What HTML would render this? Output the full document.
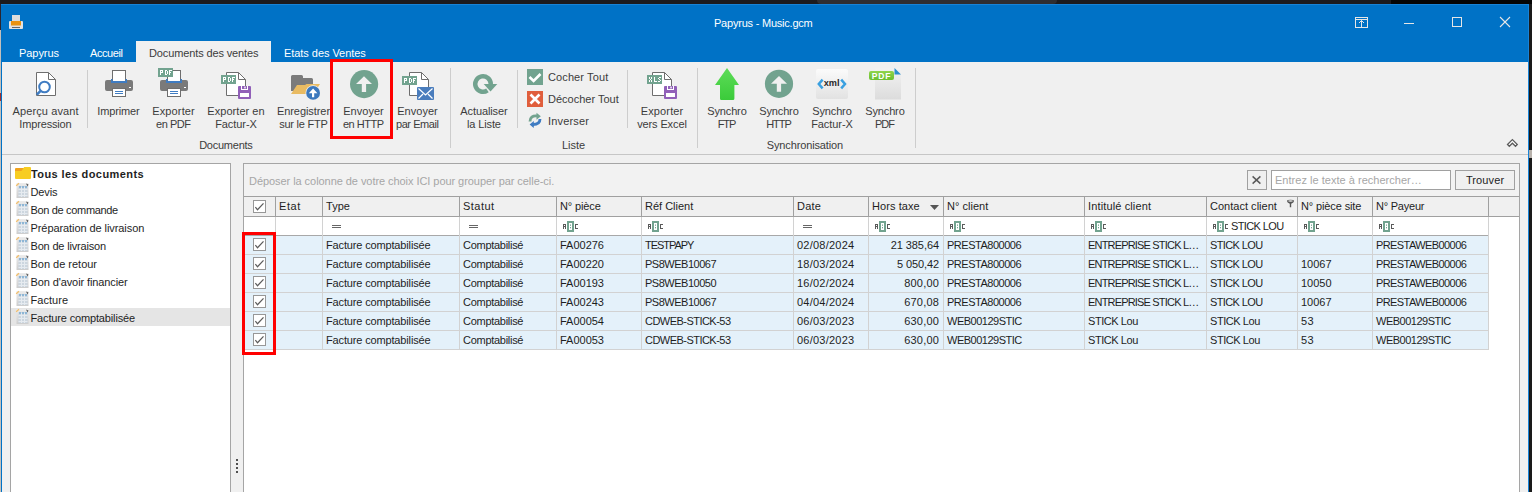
<!DOCTYPE html><html><head><meta charset="utf-8"><style>
*{margin:0;padding:0;box-sizing:border-box}
html,body{width:1532px;height:492px;overflow:hidden;background:#1d1c1f;font-family:"Liberation Sans",sans-serif;font-size:11px;color:#1e1e1e}
.a{position:absolute}
.t{position:absolute;white-space:nowrap;line-height:13px;font-size:11px}
.c{text-align:center}
.w{color:#fff}
.g{color:#a6a6a6}
.b{font-weight:bold}
.r{color:#3c3c3c}
#ov{position:absolute;left:0;top:0}
</style></head><body>
<div class="a" style="left:0px;top:0px;width:1532px;height:4px;background:#1c1b1e"></div>
<div class="a" style="left:817px;top:0px;width:240px;height:4px;background:#2f2e31;border-radius:0 0 6px 6px"></div>
<div class="a" style="left:1391px;top:0px;width:141px;height:4px;background:#050505"></div>
<div class="a" style="left:0px;top:4px;width:1px;height:26px;background:#2a2530"></div>
<div class="a" style="left:0px;top:30px;width:1px;height:462px;background:#c4c0bc"></div>
<div class="a" style="left:0px;top:93px;width:1px;height:8px;background:#a03030"></div>
<div class="a" style="left:1529px;top:4px;width:3px;height:488px;background:#1a1a1a"></div>
<div class="a" style="left:1529px;top:150px;width:3px;height:8px;background:#b8b2ac"></div>
<div class="a" style="left:1px;top:4px;width:1528px;height:58px;background:#0072c6"></div>
<div class="a" style="left:1px;top:4px;width:1528px;height:1px;background:#1883d7"></div>
<div class="a" style="left:1px;top:62px;width:1528px;height:430px;background:#f0f0f0"></div>
<div class="a" style="left:1px;top:62px;width:1px;height:430px;background:#0072c6"></div>
<div class="a" style="left:1528px;top:4px;width:1px;height:488px;background:#1883d7"></div>
<div class="a" style="left:2px;top:154px;width:1526px;height:1px;background:#c6c6c6"></div>
<div class="t w" style="left:714px;top:17px;letter-spacing:-0.217px;">Papyrus - Music.gcm</div>
<div class="a" style="left:136px;top:41px;width:135px;height:21px;background:#f0f0f0"></div>
<div class="t w" style="left:19px;top:47px;letter-spacing:-0.06px;">Papyrus</div>
<div class="t w" style="left:90px;top:47px;letter-spacing:-0.411px;">Accueil</div>
<div class="t r" style="left:149px;top:47px;letter-spacing:-0.126px;">Documents des ventes</div>
<div class="t w" style="left:284px;top:47px;letter-spacing:-0.051px;">Etats des Ventes</div>
<div class="a" style="left:87px;top:70px;width:1px;height:58px;background:#cdcdcd"></div>
<div class="a" style="left:517px;top:70px;width:1px;height:58px;background:#cdcdcd"></div>
<div class="a" style="left:627px;top:70px;width:1px;height:58px;background:#cdcdcd"></div>
<div class="a" style="left:450px;top:68px;width:1px;height:80px;background:#cdcdcd"></div>
<div class="a" style="left:697px;top:68px;width:1px;height:80px;background:#cdcdcd"></div>
<div class="a" style="left:915px;top:68px;width:1px;height:80px;background:#cdcdcd"></div>
<div class="t c r" style="left:-54.4465px;top:105px;width:200px;letter-spacing:0.107px;">Aperçu avant</div>
<div class="t c r" style="left:-54.583px;top:118px;width:200px;letter-spacing:-0.166px;">Impression</div>
<div class="t c r" style="left:18.429px;top:105px;width:200px;letter-spacing:-0.142px;">Imprimer</div>
<div class="t c r" style="left:73.566px;top:105px;width:200px;letter-spacing:0.132px;">Exporter</div>
<div class="t c r" style="left:73.2705px;top:118px;width:200px;letter-spacing:-0.459px;">en PDF</div>
<div class="t c r" style="left:136.021px;top:105px;width:200px;letter-spacing:0.042px;">Exporter en</div>
<div class="t c r" style="left:135.965px;top:118px;width:200px;letter-spacing:-0.07px;">Factur-X</div>
<div class="t c r" style="left:203.47px;top:105px;width:200px;letter-spacing:-0.06px;">Enregistrer</div>
<div class="t c r" style="left:203.376px;top:118px;width:200px;letter-spacing:-0.248px;">sur le FTP</div>
<div class="t c r" style="left:263.5115px;top:105px;width:200px;letter-spacing:0.023px;">Envoyer</div>
<div class="t c r" style="left:263.2485px;top:118px;width:200px;letter-spacing:-0.503px;">en HTTP</div>
<div class="t c r" style="left:317.5115px;top:105px;width:200px;letter-spacing:0.023px;">Envoyer</div>
<div class="t c r" style="left:317.283px;top:118px;width:200px;letter-spacing:-0.434px;">par Email</div>
<div class="t c r" style="left:383.9445px;top:105px;width:200px;letter-spacing:-0.111px;">Actualiser</div>
<div class="t c r" style="left:383.9385px;top:118px;width:200px;letter-spacing:-0.123px;">la Liste</div>
<div class="t c r" style="left:562.066px;top:105px;width:200px;letter-spacing:0.132px;">Exporter</div>
<div class="t c r" style="left:561.9415px;top:118px;width:200px;letter-spacing:-0.117px;">vers Excel</div>
<div class="t c r" style="left:626.9365px;top:105px;width:200px;letter-spacing:-0.127px;">Synchro</div>
<div class="t c r" style="left:626.4295px;top:118px;width:200px;letter-spacing:-1.141px;">FTP</div>
<div class="t c r" style="left:678.9365px;top:105px;width:200px;letter-spacing:-0.127px;">Synchro</div>
<div class="t c r" style="left:678.4775px;top:118px;width:200px;letter-spacing:-1.045px;">HTTP</div>
<div class="t c r" style="left:731.9365px;top:105px;width:200px;letter-spacing:-0.127px;">Synchro</div>
<div class="t c r" style="left:731.965px;top:118px;width:200px;letter-spacing:-0.07px;">Factur-X</div>
<div class="t c r" style="left:784.9365px;top:105px;width:200px;letter-spacing:-0.127px;">Synchro</div>
<div class="t c r" style="left:784.525px;top:118px;width:200px;letter-spacing:-0.95px;">PDF</div>
<div class="t r" style="left:548px;top:71px;letter-spacing:0.109px;">Cocher Tout</div>
<div class="t r" style="left:548px;top:93px;letter-spacing:0.005px;">Décocher Tout</div>
<div class="t r" style="left:548px;top:115px;letter-spacing:0.179px;">Inverser</div>
<div class="t c r" style="left:125.8785px;top:139px;width:200px;letter-spacing:-0.243px;">Documents</div>
<div class="t c r" style="left:473.4935px;top:139px;width:200px;letter-spacing:-0.013px;">Liste</div>
<div class="t c r" style="left:704.933px;top:139px;width:200px;letter-spacing:-0.134px;">Synchronisation</div>
<div class="a" style="left:10px;top:163px;width:221px;height:340px;background:#fff;border:1px solid #a5a5a5"></div>
<div class="a" style="left:11px;top:308px;width:219px;height:18px;background:#e5e5e5"></div>
<div class="t b" style="left:31px;top:168px;letter-spacing:0.415px;">Tous les documents</div>
<div class="t " style="left:30.5px;top:186px;letter-spacing:-0.104px;">Devis</div>
<div class="t " style="left:30.5px;top:204px;letter-spacing:-0.332px;">Bon de commande</div>
<div class="t " style="left:30.5px;top:222px;letter-spacing:-0.077px;">Préparation de livraison</div>
<div class="t " style="left:30.5px;top:240px;letter-spacing:-0.179px;">Bon de livraison</div>
<div class="t " style="left:30.5px;top:258px;letter-spacing:-0.013px;">Bon de retour</div>
<div class="t " style="left:30.5px;top:276px;letter-spacing:-0.106px;">Bon d'avoir financier</div>
<div class="t " style="left:30.5px;top:294px;letter-spacing:0.051px;">Facture</div>
<div class="t " style="left:30.5px;top:312px;letter-spacing:-0.15px;">Facture comptabilisée</div>
<div class="a" style="left:236px;top:459px;width:2px;height:2px;background:#505050"></div>
<div class="a" style="left:236px;top:463px;width:2px;height:2px;background:#505050"></div>
<div class="a" style="left:236px;top:467px;width:2px;height:2px;background:#505050"></div>
<div class="a" style="left:236px;top:471px;width:2px;height:2px;background:#505050"></div>
<div class="a" style="left:243px;top:163px;width:1277px;height:340px;background:#f2f2f2;border:1px solid #a5a5a5"></div>
<div class="t g" style="left:249px;top:175px;letter-spacing:-0.057px;">Déposer la colonne de votre choix ICI pour grouper par celle-ci.</div>
<div class="a" style="left:1247px;top:170px;width:20px;height:20px;background:#f0f0f0;border:1px solid #a0a0a0"></div>
<div class="a" style="left:1271px;top:170px;width:180px;height:20px;background:#fff;border:1px solid #a0a0a0"></div>
<div class="t g" style="left:1275px;top:174px;letter-spacing:0.024px;">Entrez le texte à rechercher…</div>
<div class="a" style="left:1455px;top:170px;width:60px;height:20px;background:#f0f0f0;border:1px solid #a0a0a0"></div>
<div class="t c " style="left:1385.0585px;top:174px;width:200px;letter-spacing:0.117px;">Trouver</div>
<div class="a" style="left:244px;top:196px;width:1275px;height:296px;background:#fff"></div>
<div class="a" style="left:244px;top:196px;width:1275px;height:20px;background:#f0f0f0"></div>
<div class="a" style="left:244px;top:196px;width:1275px;height:1px;background:#a0a0a0"></div>
<div class="a" style="left:244px;top:216px;width:1275px;height:1px;background:#a0a0a0"></div>
<div class="a" style="left:244px;top:235px;width:1245px;height:1px;background:#a8a8a8"></div>
<div class="a" style="left:244px;top:236px;width:1244px;height:18px;background:#e4f1fa"></div>
<div class="a" style="left:244px;top:254px;width:1244px;height:1px;background:#d2d2d2"></div>
<div class="a" style="left:244px;top:255px;width:1244px;height:18px;background:#e4f1fa"></div>
<div class="a" style="left:244px;top:273px;width:1244px;height:1px;background:#d2d2d2"></div>
<div class="a" style="left:244px;top:274px;width:1244px;height:18px;background:#e4f1fa"></div>
<div class="a" style="left:244px;top:292px;width:1244px;height:1px;background:#d2d2d2"></div>
<div class="a" style="left:244px;top:293px;width:1244px;height:18px;background:#e4f1fa"></div>
<div class="a" style="left:244px;top:311px;width:1244px;height:1px;background:#d2d2d2"></div>
<div class="a" style="left:244px;top:312px;width:1244px;height:18px;background:#e4f1fa"></div>
<div class="a" style="left:244px;top:330px;width:1244px;height:1px;background:#d2d2d2"></div>
<div class="a" style="left:244px;top:331px;width:1244px;height:18px;background:#e4f1fa"></div>
<div class="a" style="left:244px;top:349px;width:1244px;height:1px;background:#d2d2d2"></div>
<div class="a" style="left:275px;top:196px;width:1px;height:20px;background:#a0a0a0"></div>
<div class="a" style="left:275px;top:217px;width:1px;height:133px;background:#d2d2d2"></div>
<div class="a" style="left:322px;top:196px;width:1px;height:20px;background:#a0a0a0"></div>
<div class="a" style="left:322px;top:217px;width:1px;height:133px;background:#d2d2d2"></div>
<div class="a" style="left:459px;top:196px;width:1px;height:20px;background:#a0a0a0"></div>
<div class="a" style="left:459px;top:217px;width:1px;height:133px;background:#d2d2d2"></div>
<div class="a" style="left:556px;top:196px;width:1px;height:20px;background:#a0a0a0"></div>
<div class="a" style="left:556px;top:217px;width:1px;height:133px;background:#d2d2d2"></div>
<div class="a" style="left:641px;top:196px;width:1px;height:20px;background:#a0a0a0"></div>
<div class="a" style="left:641px;top:217px;width:1px;height:133px;background:#d2d2d2"></div>
<div class="a" style="left:793px;top:196px;width:1px;height:20px;background:#a0a0a0"></div>
<div class="a" style="left:793px;top:217px;width:1px;height:133px;background:#d2d2d2"></div>
<div class="a" style="left:868px;top:196px;width:1px;height:20px;background:#a0a0a0"></div>
<div class="a" style="left:868px;top:217px;width:1px;height:133px;background:#d2d2d2"></div>
<div class="a" style="left:943px;top:196px;width:1px;height:20px;background:#a0a0a0"></div>
<div class="a" style="left:943px;top:217px;width:1px;height:133px;background:#d2d2d2"></div>
<div class="a" style="left:1084px;top:196px;width:1px;height:20px;background:#a0a0a0"></div>
<div class="a" style="left:1084px;top:217px;width:1px;height:133px;background:#d2d2d2"></div>
<div class="a" style="left:1206px;top:196px;width:1px;height:20px;background:#a0a0a0"></div>
<div class="a" style="left:1206px;top:217px;width:1px;height:133px;background:#d2d2d2"></div>
<div class="a" style="left:1297px;top:196px;width:1px;height:20px;background:#a0a0a0"></div>
<div class="a" style="left:1297px;top:217px;width:1px;height:133px;background:#d2d2d2"></div>
<div class="a" style="left:1372px;top:196px;width:1px;height:20px;background:#a0a0a0"></div>
<div class="a" style="left:1372px;top:217px;width:1px;height:133px;background:#d2d2d2"></div>
<div class="a" style="left:1488px;top:196px;width:1px;height:20px;background:#a0a0a0"></div>
<div class="a" style="left:1488px;top:217px;width:1px;height:133px;background:#d2d2d2"></div>
<div class="a" style="left:253px;top:200px;width:13px;height:13px;background:#fff;border:1px solid #979797"></div>
<div class="t " style="left:279px;top:200px;letter-spacing:0.574px;">Etat</div>
<div class="t " style="left:326px;top:200px;letter-spacing:0.014px;">Type</div>
<div class="t " style="left:463px;top:200px;letter-spacing:0.47px;">Statut</div>
<div class="t " style="left:560px;top:200px;letter-spacing:-0.129px;">N° pièce</div>
<div class="t " style="left:645px;top:200px;letter-spacing:0.0px;">Réf Client</div>
<div class="t " style="left:797px;top:200px;letter-spacing:0.183px;">Date</div>
<div class="t " style="left:872px;top:200px;letter-spacing:0.078px;">Hors taxe</div>
<div class="t " style="left:947px;top:200px;letter-spacing:0.015px;">N° client</div>
<div class="t " style="left:1088px;top:200px;letter-spacing:0.132px;">Intitulé client</div>
<div class="t " style="left:1210px;top:200px;letter-spacing:0.019px;">Contact client</div>
<div class="t " style="left:1301px;top:200px;letter-spacing:-0.123px;">N° pièce site</div>
<div class="t " style="left:1376px;top:200px;letter-spacing:-0.221px;">N° Payeur</div>
<div class="a" style="left:332px;top:225px;width:9px;height:1px;background:#666"></div>
<div class="a" style="left:332px;top:227px;width:9px;height:1px;background:#666"></div>
<div class="a" style="left:469px;top:225px;width:9px;height:1px;background:#666"></div>
<div class="a" style="left:469px;top:227px;width:9px;height:1px;background:#666"></div>
<div class="a" style="left:803px;top:225px;width:9px;height:1px;background:#666"></div>
<div class="a" style="left:803px;top:227px;width:9px;height:1px;background:#666"></div>
<div class="t " style="left:1231px;top:220px;letter-spacing:-0.622px;">STICK LOU</div>
<div class="a" style="left:253px;top:238px;width:13px;height:13px;background:#fff;border:1px solid #979797"></div>
<div class="t " style="left:326px;top:239px;letter-spacing:-0.15px;">Facture comptabilisée</div>
<div class="t " style="left:463px;top:239px;letter-spacing:-0.281px;">Comptabilisé</div>
<div class="t " style="left:560px;top:239px;letter-spacing:-0.008px;">FA00276</div>
<div class="t " style="left:645px;top:239px;letter-spacing:-1.037px;">TESTPAPY</div>
<div class="t " style="left:797px;top:239px;letter-spacing:0.226px;">02/08/2024</div>
<div class="t" style="left:843px;top:239px;width:96px;text-align:right;letter-spacing:-0.067px;margin-right:--0.067px">21 385,64</div>
<div class="t " style="left:947px;top:239px;letter-spacing:-0.482px;">PRESTA800006</div>
<div class="t " style="left:1088px;top:239px;letter-spacing:-0.818px;">ENTREPRISE STICK L…</div>
<div class="t " style="left:1210px;top:239px;letter-spacing:-0.622px;">STICK LOU</div>
<div class="t " style="left:1301px;top:239px;"></div>
<div class="t " style="left:1376px;top:239px;letter-spacing:-0.588px;">PRESTAWEB00006</div>
<div class="a" style="left:253px;top:257px;width:13px;height:13px;background:#fff;border:1px solid #979797"></div>
<div class="t " style="left:326px;top:258px;letter-spacing:-0.15px;">Facture comptabilisée</div>
<div class="t " style="left:463px;top:258px;letter-spacing:-0.281px;">Comptabilisé</div>
<div class="t " style="left:560px;top:258px;letter-spacing:-0.008px;">FA00220</div>
<div class="t " style="left:645px;top:258px;letter-spacing:-0.484px;">PS8WEB10067</div>
<div class="t " style="left:797px;top:258px;letter-spacing:0.226px;">18/03/2024</div>
<div class="t" style="left:843px;top:258px;width:96px;text-align:right;letter-spacing:-0.104px;margin-right:--0.104px">5 050,42</div>
<div class="t " style="left:947px;top:258px;letter-spacing:-0.482px;">PRESTA800006</div>
<div class="t " style="left:1088px;top:258px;letter-spacing:-0.818px;">ENTREPRISE STICK L…</div>
<div class="t " style="left:1210px;top:258px;letter-spacing:-0.622px;">STICK LOU</div>
<div class="t " style="left:1301px;top:258px;letter-spacing:0.002px;">10067</div>
<div class="t " style="left:1376px;top:258px;letter-spacing:-0.588px;">PRESTAWEB00006</div>
<div class="a" style="left:253px;top:276px;width:13px;height:13px;background:#fff;border:1px solid #979797"></div>
<div class="t " style="left:326px;top:277px;letter-spacing:-0.15px;">Facture comptabilisée</div>
<div class="t " style="left:463px;top:277px;letter-spacing:-0.281px;">Comptabilisé</div>
<div class="t " style="left:560px;top:277px;letter-spacing:-0.008px;">FA00193</div>
<div class="t " style="left:645px;top:277px;letter-spacing:-0.484px;">PS8WEB10050</div>
<div class="t " style="left:797px;top:277px;letter-spacing:0.226px;">16/02/2024</div>
<div class="t" style="left:843px;top:277px;width:96px;text-align:right;letter-spacing:0.189px;margin-right:-0.189px">800,00</div>
<div class="t " style="left:947px;top:277px;letter-spacing:-0.482px;">PRESTA800006</div>
<div class="t " style="left:1088px;top:277px;letter-spacing:-0.818px;">ENTREPRISE STICK L…</div>
<div class="t " style="left:1210px;top:277px;letter-spacing:-0.622px;">STICK LOU</div>
<div class="t " style="left:1301px;top:277px;letter-spacing:0.002px;">10050</div>
<div class="t " style="left:1376px;top:277px;letter-spacing:-0.588px;">PRESTAWEB00006</div>
<div class="a" style="left:253px;top:295px;width:13px;height:13px;background:#fff;border:1px solid #979797"></div>
<div class="t " style="left:326px;top:296px;letter-spacing:-0.15px;">Facture comptabilisée</div>
<div class="t " style="left:463px;top:296px;letter-spacing:-0.281px;">Comptabilisé</div>
<div class="t " style="left:560px;top:296px;letter-spacing:-0.008px;">FA00243</div>
<div class="t " style="left:645px;top:296px;letter-spacing:-0.484px;">PS8WEB10067</div>
<div class="t " style="left:797px;top:296px;letter-spacing:0.226px;">04/04/2024</div>
<div class="t" style="left:843px;top:296px;width:96px;text-align:right;letter-spacing:0.189px;margin-right:-0.189px">670,08</div>
<div class="t " style="left:947px;top:296px;letter-spacing:-0.482px;">PRESTA800006</div>
<div class="t " style="left:1088px;top:296px;letter-spacing:-0.818px;">ENTREPRISE STICK L…</div>
<div class="t " style="left:1210px;top:296px;letter-spacing:-0.622px;">STICK LOU</div>
<div class="t " style="left:1301px;top:296px;letter-spacing:0.002px;">10067</div>
<div class="t " style="left:1376px;top:296px;letter-spacing:-0.588px;">PRESTAWEB00006</div>
<div class="a" style="left:253px;top:314px;width:13px;height:13px;background:#fff;border:1px solid #979797"></div>
<div class="t " style="left:326px;top:315px;letter-spacing:-0.15px;">Facture comptabilisée</div>
<div class="t " style="left:463px;top:315px;letter-spacing:-0.281px;">Comptabilisé</div>
<div class="t " style="left:560px;top:315px;letter-spacing:-0.008px;">FA00054</div>
<div class="t " style="left:645px;top:315px;letter-spacing:-0.531px;">CDWEB-STICK-53</div>
<div class="t " style="left:797px;top:315px;letter-spacing:0.226px;">06/03/2023</div>
<div class="t" style="left:843px;top:315px;width:96px;text-align:right;letter-spacing:0.189px;margin-right:-0.189px">630,00</div>
<div class="t " style="left:947px;top:315px;letter-spacing:-0.5px;">WEB00129STIC</div>
<div class="t " style="left:1088px;top:315px;letter-spacing:-0.439px;">STICK Lou</div>
<div class="t " style="left:1210px;top:315px;letter-spacing:-0.439px;">STICK Lou</div>
<div class="t " style="left:1301px;top:315px;letter-spacing:0.35px;">53</div>
<div class="t " style="left:1376px;top:315px;letter-spacing:-0.5px;">WEB00129STIC</div>
<div class="a" style="left:253px;top:333px;width:13px;height:13px;background:#fff;border:1px solid #979797"></div>
<div class="t " style="left:326px;top:334px;letter-spacing:-0.15px;">Facture comptabilisée</div>
<div class="t " style="left:463px;top:334px;letter-spacing:-0.281px;">Comptabilisé</div>
<div class="t " style="left:560px;top:334px;letter-spacing:-0.008px;">FA00053</div>
<div class="t " style="left:645px;top:334px;letter-spacing:-0.531px;">CDWEB-STICK-53</div>
<div class="t " style="left:797px;top:334px;letter-spacing:0.226px;">06/03/2023</div>
<div class="t" style="left:843px;top:334px;width:96px;text-align:right;letter-spacing:0.189px;margin-right:-0.189px">630,00</div>
<div class="t " style="left:947px;top:334px;letter-spacing:-0.5px;">WEB00129STIC</div>
<div class="t " style="left:1088px;top:334px;letter-spacing:-0.439px;">STICK Lou</div>
<div class="t " style="left:1210px;top:334px;letter-spacing:-0.439px;">STICK Lou</div>
<div class="t " style="left:1301px;top:334px;letter-spacing:0.35px;">53</div>
<div class="t " style="left:1376px;top:334px;letter-spacing:-0.5px;">WEB00129STIC</div>
<svg id="ov" width="1532" height="492" viewBox="0 0 1532 492"><rect x="12" y="15" width="8" height="7" fill="#dcdcdc"/><rect x="9" y="21" width="14" height="8" rx="1" fill="#e2e2e2"/><rect x="11" y="21" width="10" height="4.5" fill="#ea9210"/><rect x="12" y="27" width="8" height="1" fill="#666"/><g fill="none" stroke="#e6e6e6" stroke-width="1"><rect x="1355.5" y="17.5" width="12" height="10"/><line x1="1355.5" y1="19.5" x2="1367.5" y2="19.5"/><line x1="1361.5" y1="20.5" x2="1361.5" y2="27.5"/><polyline points="1359,23 1361.5,20.5 1364,23"/></g><line x1="1404" y1="23.5" x2="1414" y2="23.5" stroke="#e6e6e6"/><rect x="1452.5" y="17.5" width="9" height="9" fill="none" stroke="#e6e6e6"/><g stroke="#e6e6e6" stroke-width="1.1"><line x1="1500" y1="17" x2="1510" y2="27"/><line x1="1510" y1="17" x2="1500" y2="27"/></g><path d="M36.5,95.5 V72.5 H48.5 L55.5,79.5 V95.5 Z" fill="#fff" stroke="#6e6e6e"/><path d="M48.5,72.5 V79.5 H55.5" fill="none" stroke="#6e6e6e"/><circle cx="44.5" cy="87" r="5.3" fill="#fff" stroke="#3f7cc2" stroke-width="2"/><line x1="40.6" y1="90.9" x2="36.8" y2="94.7" stroke="#3f7cc2" stroke-width="2.6"/><rect x="112.5" y="70.5" width="13" height="12" fill="#fff" stroke="#6e6e6e"/><path d="M107,80 H111 V83 H127 V80 H131 Q133,80 133,82 V89 Q133,91 131,91 H107 Q105,91 105,89 V82 Q105,80 107,80 Z" fill="#7a7a7a"/><path d="M111,79 V83 H127 V79 H125.5 V81 H112.5 V79 Z" fill="#3f7cc2"/><rect x="129" y="87" width="2" height="1" fill="#fff"/><rect x="112.5" y="88.5" width="13" height="8" fill="#fff" stroke="#6e6e6e"/><rect x="115" y="91" width="8" height="1" fill="#3f7cc2"/><rect x="115" y="93" width="8" height="1" fill="#3f7cc2"/><rect x="167.5" y="70.5" width="13" height="12" fill="#fff" stroke="#6e6e6e"/><path d="M162,80 H166 V83 H182 V80 H186 Q188,80 188,82 V89 Q188,91 186,91 H162 Q160,91 160,89 V82 Q160,80 162,80 Z" fill="#7a7a7a"/><path d="M166,79 V83 H182 V79 H180.5 V81 H167.5 V79 Z" fill="#3f7cc2"/><rect x="184" y="87" width="2" height="1" fill="#fff"/><rect x="167.5" y="88.5" width="13" height="8" fill="#fff" stroke="#6e6e6e"/><rect x="170" y="91" width="8" height="1" fill="#3f7cc2"/><rect x="170" y="93" width="8" height="1" fill="#3f7cc2"/><rect x="158" y="68" width="15" height="9" fill="#72a38f"/><path d="M160,70h1v1h-1zM161,70h1v1h-1zM162,70h1v1h-1zM160,71h1v1h-1zM162,71h1v1h-1zM160,72h1v1h-1zM161,72h1v1h-1zM162,72h1v1h-1zM160,73h1v1h-1zM160,74h1v1h-1zM165,70h1v1h-1zM166,70h1v1h-1zM165,71h1v1h-1zM167,71h1v1h-1zM165,72h1v1h-1zM167,72h1v1h-1zM165,73h1v1h-1zM167,73h1v1h-1zM165,74h1v1h-1zM166,74h1v1h-1zM169,70h1v1h-1zM170,70h1v1h-1zM171,70h1v1h-1zM169,71h1v1h-1zM169,72h1v1h-1zM170,72h1v1h-1zM169,73h1v1h-1zM169,74h1v1h-1z" fill="#fff" shape-rendering="crispEdges"/><path d="M226.5,95.5 V72.5 H238.5 L245.5,79.5 V95.5 Z" fill="#fff" stroke="#6e6e6e"/><path d="M238.5,72.5 V79.5 H245.5" fill="none" stroke="#6e6e6e"/><rect x="221" y="75" width="15" height="9" fill="#72a38f"/><path d="M223,77h1v1h-1zM224,77h1v1h-1zM225,77h1v1h-1zM223,78h1v1h-1zM225,78h1v1h-1zM223,79h1v1h-1zM224,79h1v1h-1zM225,79h1v1h-1zM223,80h1v1h-1zM223,81h1v1h-1zM228,77h1v1h-1zM229,77h1v1h-1zM228,78h1v1h-1zM230,78h1v1h-1zM228,79h1v1h-1zM230,79h1v1h-1zM228,80h1v1h-1zM230,80h1v1h-1zM228,81h1v1h-1zM229,81h1v1h-1zM232,77h1v1h-1zM233,77h1v1h-1zM234,77h1v1h-1zM232,78h1v1h-1zM232,79h1v1h-1zM233,79h1v1h-1zM232,80h1v1h-1zM232,81h1v1h-1z" fill="#fff" shape-rendering="crispEdges"/><rect x="238" y="86" width="13" height="13" rx="1" fill="#9160b8"/><rect x="241" y="86" width="7" height="4" fill="#fff"/><rect x="242" y="86" width="5" height="3" fill="#9160b8"/><rect x="244.3" y="86.6" width="1.4" height="1.8" fill="#fff"/><rect x="240" y="93" width="9" height="4" fill="#fff"/><path d="M291,76.5 Q291,75 292.5,75 H301.5 Q303,75 303,76.5 V78 H311.5 Q313,78 313,79.5 V91 H291 Z" fill="#7b7b7b"/><path d="M297,85 H305 L306.5,84 H320 L313.5,94 H291 Z" fill="#e9bb62"/><circle cx="313.1" cy="92.9" r="7.6" fill="#f0f0f0"/><circle cx="313.1" cy="92.9" r="6.9" fill="#3b78bd"/><path d="M308.8,93.3 L313.1,88.6 L317.4,93.3 H314.2 V97.2 H312 V93.3 Z" fill="#fff"/><circle cx="364.1" cy="84.1" r="14.1" fill="#72a38f"/><path d="M364,76.2 L372,84 H366.1 V92 H361.8 V84 H356 Z" fill="#f0f0f0"/><path d="M409.5,95.5 V72.5 H421.5 L428.5,79.5 V95.5 Z" fill="#fff" stroke="#6e6e6e"/><path d="M421.5,72.5 V79.5 H428.5" fill="none" stroke="#6e6e6e"/><rect x="402" y="76" width="15" height="9" fill="#72a38f"/><path d="M404,78h1v1h-1zM405,78h1v1h-1zM406,78h1v1h-1zM404,79h1v1h-1zM406,79h1v1h-1zM404,80h1v1h-1zM405,80h1v1h-1zM406,80h1v1h-1zM404,81h1v1h-1zM404,82h1v1h-1zM409,78h1v1h-1zM410,78h1v1h-1zM409,79h1v1h-1zM411,79h1v1h-1zM409,80h1v1h-1zM411,80h1v1h-1zM409,81h1v1h-1zM411,81h1v1h-1zM409,82h1v1h-1zM410,82h1v1h-1zM413,78h1v1h-1zM414,78h1v1h-1zM415,78h1v1h-1zM413,79h1v1h-1zM413,80h1v1h-1zM414,80h1v1h-1zM413,81h1v1h-1zM413,82h1v1h-1z" fill="#fff" shape-rendering="crispEdges"/><rect x="417" y="87" width="17" height="13" rx="1" fill="#4a7dbd"/><path d="M418.5,88.5 L425.5,95 L432.5,88.5 M418.5,98.5 L423,94 M432.5,98.5 L428,94" fill="none" stroke="#fff" stroke-width="1.2"/><path d="M490.75,84 A7.75,7.75 0 1 0 487.45,90.35" fill="none" stroke="#72a38f" stroke-width="4.5"/><path d="M483.7,84 H497.3 L490.5,91.4 Z" fill="#72a38f"/><rect x="527" y="69" width="16" height="16" fill="#72a38f"/><path d="M529.5,77 L533.6,81 L540.5,74" fill="none" stroke="#fff" stroke-width="2.6"/><rect x="527" y="91" width="16" height="16" fill="#e05e3c"/><path d="M530.5,94.5 L539.5,103.5 M539.5,94.5 L530.5,103.5" stroke="#fff" stroke-width="2.6"/><path d="M530,121.5 Q530,115.5 537,116" fill="none" stroke="#72a38f" stroke-width="2.8"/><path d="M536.5,112.8 L540.8,116.2 L536.5,119.8 Z" fill="#72a38f"/><path d="M540,119 Q540,124.5 533,124.5" fill="none" stroke="#3f7cc2" stroke-width="2.8"/><path d="M533.8,121 L529.6,124.5 L533.8,128 Z" fill="#3f7cc2"/><path d="M652.5,95.5 V72.5 H664.5 L671.5,79.5 V95.5 Z" fill="#fff" stroke="#6e6e6e"/><path d="M664.5,72.5 V79.5 H671.5" fill="none" stroke="#6e6e6e"/><rect x="647" y="75" width="15" height="9" fill="#72a38f"/><path d="M649,77h1v1h-1zM651,77h1v1h-1zM649,78h1v1h-1zM651,78h1v1h-1zM650,79h1v1h-1zM649,80h1v1h-1zM651,80h1v1h-1zM649,81h1v1h-1zM651,81h1v1h-1zM654,77h1v1h-1zM654,78h1v1h-1zM654,79h1v1h-1zM654,80h1v1h-1zM654,81h1v1h-1zM655,81h1v1h-1zM656,81h1v1h-1zM659,77h1v1h-1zM660,77h1v1h-1zM658,78h1v1h-1zM659,79h1v1h-1zM660,80h1v1h-1zM658,81h1v1h-1zM659,81h1v1h-1z" fill="#fff" shape-rendering="crispEdges"/><rect x="664" y="86" width="13" height="13" rx="1" fill="#9160b8"/><rect x="667" y="86" width="7" height="4" fill="#fff"/><rect x="668" y="86" width="5" height="3" fill="#9160b8"/><rect x="670.3" y="86.6" width="1.4" height="1.8" fill="#fff"/><rect x="666" y="93" width="9" height="4" fill="#fff"/><defs><linearGradient id="ga" x1="0" y1="0" x2="0" y2="1"><stop offset="0" stop-color="#5ddc58"/><stop offset="1" stop-color="#3bcb3a"/></linearGradient><linearGradient id="gx" x1="0" y1="0" x2="0" y2="1"><stop offset="0" stop-color="#fbfbfb"/><stop offset="1" stop-color="#e2e2e2"/></linearGradient><linearGradient id="gp" x1="0" y1="0" x2="0" y2="1"><stop offset="0" stop-color="#f2f2f2"/><stop offset="1" stop-color="#dcdcdc"/></linearGradient><linearGradient id="gt" x1="0" y1="0" x2="0" y2="1"><stop offset="0" stop-color="#ececec"/><stop offset="1" stop-color="#cdcdcd"/></linearGradient><linearGradient id="gg" x1="0" y1="0" x2="0" y2="1"><stop offset="0" stop-color="#8fd44c"/><stop offset="1" stop-color="#6cbf30"/></linearGradient></defs><path d="M727,68 L739,85 H734.4 V98.5 Q734.4,100 733,100 H721.3 Q720,100 720,98.5 V85 H715 Z" fill="url(#ga)"/><circle cx="779" cy="83.8" r="14.1" fill="#72a38f"/><path d="M779,76 L787,83.7 H781.1 V91.7 H776.8 V83.7 H771 Z" fill="#f0f0f0"/><rect x="816" y="69" width="32" height="30" rx="2" fill="url(#gx)"/><path d="M822.6,79.6 L818.8,84 L822.6,88.4" fill="none" stroke="#3aa0e0" stroke-width="2.5"/><path d="M841.2,79.6 L845,84 L841.2,88.4" fill="none" stroke="#3aa0e0" stroke-width="2.5"/><text x="831.6" y="86.4" font-family="Liberation Sans" font-weight="bold" font-size="9.2" fill="#2a2a2a" text-anchor="middle">xml</text><rect x="875" y="68.5" width="26" height="31" fill="url(#gp)"/><path d="M894.5,68 L901,74.5 H894.5 Z" fill="#2b8fcc"/><rect x="869" y="71" width="25" height="9" rx="2" fill="url(#gg)"/><text x="881.5" y="78.8" font-family="Liberation Sans" font-weight="bold" font-size="8.5" fill="#fff" text-anchor="middle" letter-spacing="0.8">PDF</text><path d="M1507.5,144.5 L1512.4,139.6 L1517.3,144.5 L1515.5,146.3 L1512.4,143.2 L1509.3,146.3 Z" fill="#fff" stroke="#5c5c5c" stroke-width="1.25"/><path d="M15,169 Q15,168 16,168 H24 V171 H15 Z" fill="#f0a21e"/><path d="M15,171 H21.5 L24.2,167 H30 Q31,167 31,168 V178 Q31,179 30,179 H16 Q15,179 15,178 Z" fill="#f7cd22"/><rect x="16.5" y="183" width="12" height="15" fill="url(#gt)"/><rect x="18.5" y="186" width="9" height="11" fill="#ccd6df"/><path d="M18.5,189.5 H27.5 M18.5,192.5 H27.5 M18.5,195.5 H27.5 M21.5,187 V197 M24.5,187 V197" stroke="#e6ebf0" stroke-width="1"/><rect x="19" y="186" width="2" height="2" fill="#8db6d6"/><rect x="22" y="186" width="2" height="2" fill="#8db6d6"/><rect x="25" y="186" width="2" height="2" fill="#8db6d6"/><path d="M16.2,185.8 L19,183.2" stroke="#f2be6a" stroke-width="1.2"/><path d="M26,183.5 L28.5,184.5 L27.5,186.5 Z" fill="#5a5a5a"/><rect x="16.5" y="201" width="12" height="15" fill="url(#gt)"/><rect x="18.5" y="204" width="9" height="11" fill="#ccd6df"/><path d="M18.5,207.5 H27.5 M18.5,210.5 H27.5 M18.5,213.5 H27.5 M21.5,205 V215 M24.5,205 V215" stroke="#e6ebf0" stroke-width="1"/><rect x="19" y="204" width="2" height="2" fill="#8db6d6"/><rect x="22" y="204" width="2" height="2" fill="#8db6d6"/><rect x="25" y="204" width="2" height="2" fill="#8db6d6"/><path d="M16.2,203.8 L19,201.2" stroke="#f2be6a" stroke-width="1.2"/><path d="M26,201.5 L28.5,202.5 L27.5,204.5 Z" fill="#5a5a5a"/><rect x="16.5" y="219" width="12" height="15" fill="url(#gt)"/><rect x="18.5" y="222" width="9" height="11" fill="#ccd6df"/><path d="M18.5,225.5 H27.5 M18.5,228.5 H27.5 M18.5,231.5 H27.5 M21.5,223 V233 M24.5,223 V233" stroke="#e6ebf0" stroke-width="1"/><rect x="19" y="222" width="2" height="2" fill="#8db6d6"/><rect x="22" y="222" width="2" height="2" fill="#8db6d6"/><rect x="25" y="222" width="2" height="2" fill="#8db6d6"/><path d="M16.2,221.8 L19,219.2" stroke="#f2be6a" stroke-width="1.2"/><path d="M26,219.5 L28.5,220.5 L27.5,222.5 Z" fill="#5a5a5a"/><rect x="16.5" y="237" width="12" height="15" fill="url(#gt)"/><rect x="18.5" y="240" width="9" height="11" fill="#ccd6df"/><path d="M18.5,243.5 H27.5 M18.5,246.5 H27.5 M18.5,249.5 H27.5 M21.5,241 V251 M24.5,241 V251" stroke="#e6ebf0" stroke-width="1"/><rect x="19" y="240" width="2" height="2" fill="#8db6d6"/><rect x="22" y="240" width="2" height="2" fill="#8db6d6"/><rect x="25" y="240" width="2" height="2" fill="#8db6d6"/><path d="M16.2,239.8 L19,237.2" stroke="#f2be6a" stroke-width="1.2"/><path d="M26,237.5 L28.5,238.5 L27.5,240.5 Z" fill="#5a5a5a"/><rect x="16.5" y="255" width="12" height="15" fill="url(#gt)"/><rect x="18.5" y="258" width="9" height="11" fill="#ccd6df"/><path d="M18.5,261.5 H27.5 M18.5,264.5 H27.5 M18.5,267.5 H27.5 M21.5,259 V269 M24.5,259 V269" stroke="#e6ebf0" stroke-width="1"/><rect x="19" y="258" width="2" height="2" fill="#8db6d6"/><rect x="22" y="258" width="2" height="2" fill="#8db6d6"/><rect x="25" y="258" width="2" height="2" fill="#8db6d6"/><path d="M16.2,257.8 L19,255.2" stroke="#f2be6a" stroke-width="1.2"/><path d="M26,255.5 L28.5,256.5 L27.5,258.5 Z" fill="#5a5a5a"/><rect x="16.5" y="273" width="12" height="15" fill="url(#gt)"/><rect x="18.5" y="276" width="9" height="11" fill="#ccd6df"/><path d="M18.5,279.5 H27.5 M18.5,282.5 H27.5 M18.5,285.5 H27.5 M21.5,277 V287 M24.5,277 V287" stroke="#e6ebf0" stroke-width="1"/><rect x="19" y="276" width="2" height="2" fill="#8db6d6"/><rect x="22" y="276" width="2" height="2" fill="#8db6d6"/><rect x="25" y="276" width="2" height="2" fill="#8db6d6"/><path d="M16.2,275.8 L19,273.2" stroke="#f2be6a" stroke-width="1.2"/><path d="M26,273.5 L28.5,274.5 L27.5,276.5 Z" fill="#5a5a5a"/><rect x="16.5" y="291" width="12" height="15" fill="url(#gt)"/><rect x="18.5" y="294" width="9" height="11" fill="#ccd6df"/><path d="M18.5,297.5 H27.5 M18.5,300.5 H27.5 M18.5,303.5 H27.5 M21.5,295 V305 M24.5,295 V305" stroke="#e6ebf0" stroke-width="1"/><rect x="19" y="294" width="2" height="2" fill="#8db6d6"/><rect x="22" y="294" width="2" height="2" fill="#8db6d6"/><rect x="25" y="294" width="2" height="2" fill="#8db6d6"/><path d="M16.2,293.8 L19,291.2" stroke="#f2be6a" stroke-width="1.2"/><path d="M26,291.5 L28.5,292.5 L27.5,294.5 Z" fill="#5a5a5a"/><rect x="16.5" y="309" width="12" height="15" fill="url(#gt)"/><rect x="18.5" y="312" width="9" height="11" fill="#ccd6df"/><path d="M18.5,315.5 H27.5 M18.5,318.5 H27.5 M18.5,321.5 H27.5 M21.5,313 V323 M24.5,313 V323" stroke="#e6ebf0" stroke-width="1"/><rect x="19" y="312" width="2" height="2" fill="#8db6d6"/><rect x="22" y="312" width="2" height="2" fill="#8db6d6"/><rect x="25" y="312" width="2" height="2" fill="#8db6d6"/><path d="M16.2,311.8 L19,309.2" stroke="#f2be6a" stroke-width="1.2"/><path d="M26,309.5 L28.5,310.5 L27.5,312.5 Z" fill="#5a5a5a"/><path d="M1252.6,176.4 L1260.4,183.6 M1260.4,176.4 L1252.6,183.6" stroke="#5a5a5a" stroke-width="1.45"/><path d="M255.4,207.2 L257.5,209.8 L263.5,203.4" fill="none" stroke="#5c5c5c" stroke-width="1.25"/><path d="M930,205 H939 L934.5,210 Z" fill="#555"/><path d="M1287,201 Q1287,199.8 1290.5,199.8 Q1294,199.8 1294,201 Q1294,202.6 1291.2,203.8 V207.2 H1289.8 V203.8 Q1287,202.6 1287,201 Z" fill="#555"/><ellipse cx="1290.5" cy="201.1" rx="2.4" ry="0.75" fill="#e8e8e8"/><path d="M563,224h1v1h-1zM564,224h1v1h-1zM565,224h1v1h-1zM563,225h1v1h-1zM565,225h1v1h-1zM563,226h1v1h-1zM564,226h1v1h-1zM565,226h1v1h-1zM563,227h1v1h-1zM565,227h1v1h-1zM563,228h1v1h-1zM565,228h1v1h-1z" fill="#5a5a5a" shape-rendering="crispEdges"/><rect x="567" y="221" width="7" height="11" fill="#72a38f"/><rect x="569" y="223" width="3" height="7" fill="#fff"/><rect x="570" y="224.5" width="1" height="1.3" fill="#72a38f"/><rect x="570" y="227" width="1" height="1.3" fill="#72a38f"/><path d="M575,224h1v1h-1zM576,224h1v1h-1zM577,224h1v1h-1zM575,225h1v1h-1zM575,226h1v1h-1zM575,227h1v1h-1zM575,228h1v1h-1zM576,228h1v1h-1zM577,228h1v1h-1z" fill="#5a5a5a" shape-rendering="crispEdges"/><path d="M648,224h1v1h-1zM649,224h1v1h-1zM650,224h1v1h-1zM648,225h1v1h-1zM650,225h1v1h-1zM648,226h1v1h-1zM649,226h1v1h-1zM650,226h1v1h-1zM648,227h1v1h-1zM650,227h1v1h-1zM648,228h1v1h-1zM650,228h1v1h-1z" fill="#5a5a5a" shape-rendering="crispEdges"/><rect x="652" y="221" width="7" height="11" fill="#72a38f"/><rect x="654" y="223" width="3" height="7" fill="#fff"/><rect x="655" y="224.5" width="1" height="1.3" fill="#72a38f"/><rect x="655" y="227" width="1" height="1.3" fill="#72a38f"/><path d="M660,224h1v1h-1zM661,224h1v1h-1zM662,224h1v1h-1zM660,225h1v1h-1zM660,226h1v1h-1zM660,227h1v1h-1zM660,228h1v1h-1zM661,228h1v1h-1zM662,228h1v1h-1z" fill="#5a5a5a" shape-rendering="crispEdges"/><path d="M875,224h1v1h-1zM876,224h1v1h-1zM877,224h1v1h-1zM875,225h1v1h-1zM877,225h1v1h-1zM875,226h1v1h-1zM876,226h1v1h-1zM877,226h1v1h-1zM875,227h1v1h-1zM877,227h1v1h-1zM875,228h1v1h-1zM877,228h1v1h-1z" fill="#5a5a5a" shape-rendering="crispEdges"/><rect x="879" y="221" width="7" height="11" fill="#72a38f"/><rect x="881" y="223" width="3" height="7" fill="#fff"/><rect x="882" y="224.5" width="1" height="1.3" fill="#72a38f"/><rect x="882" y="227" width="1" height="1.3" fill="#72a38f"/><path d="M887,224h1v1h-1zM888,224h1v1h-1zM889,224h1v1h-1zM887,225h1v1h-1zM887,226h1v1h-1zM887,227h1v1h-1zM887,228h1v1h-1zM888,228h1v1h-1zM889,228h1v1h-1z" fill="#5a5a5a" shape-rendering="crispEdges"/><path d="M950,224h1v1h-1zM951,224h1v1h-1zM952,224h1v1h-1zM950,225h1v1h-1zM952,225h1v1h-1zM950,226h1v1h-1zM951,226h1v1h-1zM952,226h1v1h-1zM950,227h1v1h-1zM952,227h1v1h-1zM950,228h1v1h-1zM952,228h1v1h-1z" fill="#5a5a5a" shape-rendering="crispEdges"/><rect x="954" y="221" width="7" height="11" fill="#72a38f"/><rect x="956" y="223" width="3" height="7" fill="#fff"/><rect x="957" y="224.5" width="1" height="1.3" fill="#72a38f"/><rect x="957" y="227" width="1" height="1.3" fill="#72a38f"/><path d="M962,224h1v1h-1zM963,224h1v1h-1zM964,224h1v1h-1zM962,225h1v1h-1zM962,226h1v1h-1zM962,227h1v1h-1zM962,228h1v1h-1zM963,228h1v1h-1zM964,228h1v1h-1z" fill="#5a5a5a" shape-rendering="crispEdges"/><path d="M1091,224h1v1h-1zM1092,224h1v1h-1zM1093,224h1v1h-1zM1091,225h1v1h-1zM1093,225h1v1h-1zM1091,226h1v1h-1zM1092,226h1v1h-1zM1093,226h1v1h-1zM1091,227h1v1h-1zM1093,227h1v1h-1zM1091,228h1v1h-1zM1093,228h1v1h-1z" fill="#5a5a5a" shape-rendering="crispEdges"/><rect x="1095" y="221" width="7" height="11" fill="#72a38f"/><rect x="1097" y="223" width="3" height="7" fill="#fff"/><rect x="1098" y="224.5" width="1" height="1.3" fill="#72a38f"/><rect x="1098" y="227" width="1" height="1.3" fill="#72a38f"/><path d="M1103,224h1v1h-1zM1104,224h1v1h-1zM1105,224h1v1h-1zM1103,225h1v1h-1zM1103,226h1v1h-1zM1103,227h1v1h-1zM1103,228h1v1h-1zM1104,228h1v1h-1zM1105,228h1v1h-1z" fill="#5a5a5a" shape-rendering="crispEdges"/><path d="M1213,224h1v1h-1zM1214,224h1v1h-1zM1215,224h1v1h-1zM1213,225h1v1h-1zM1215,225h1v1h-1zM1213,226h1v1h-1zM1214,226h1v1h-1zM1215,226h1v1h-1zM1213,227h1v1h-1zM1215,227h1v1h-1zM1213,228h1v1h-1zM1215,228h1v1h-1z" fill="#5a5a5a" shape-rendering="crispEdges"/><rect x="1217" y="221" width="7" height="11" fill="#72a38f"/><rect x="1219" y="223" width="3" height="7" fill="#fff"/><rect x="1220" y="224.5" width="1" height="1.3" fill="#72a38f"/><rect x="1220" y="227" width="1" height="1.3" fill="#72a38f"/><path d="M1225,224h1v1h-1zM1226,224h1v1h-1zM1227,224h1v1h-1zM1225,225h1v1h-1zM1225,226h1v1h-1zM1225,227h1v1h-1zM1225,228h1v1h-1zM1226,228h1v1h-1zM1227,228h1v1h-1z" fill="#5a5a5a" shape-rendering="crispEdges"/><path d="M1304,224h1v1h-1zM1305,224h1v1h-1zM1306,224h1v1h-1zM1304,225h1v1h-1zM1306,225h1v1h-1zM1304,226h1v1h-1zM1305,226h1v1h-1zM1306,226h1v1h-1zM1304,227h1v1h-1zM1306,227h1v1h-1zM1304,228h1v1h-1zM1306,228h1v1h-1z" fill="#5a5a5a" shape-rendering="crispEdges"/><rect x="1308" y="221" width="7" height="11" fill="#72a38f"/><rect x="1310" y="223" width="3" height="7" fill="#fff"/><rect x="1311" y="224.5" width="1" height="1.3" fill="#72a38f"/><rect x="1311" y="227" width="1" height="1.3" fill="#72a38f"/><path d="M1316,224h1v1h-1zM1317,224h1v1h-1zM1318,224h1v1h-1zM1316,225h1v1h-1zM1316,226h1v1h-1zM1316,227h1v1h-1zM1316,228h1v1h-1zM1317,228h1v1h-1zM1318,228h1v1h-1z" fill="#5a5a5a" shape-rendering="crispEdges"/><path d="M1379,224h1v1h-1zM1380,224h1v1h-1zM1381,224h1v1h-1zM1379,225h1v1h-1zM1381,225h1v1h-1zM1379,226h1v1h-1zM1380,226h1v1h-1zM1381,226h1v1h-1zM1379,227h1v1h-1zM1381,227h1v1h-1zM1379,228h1v1h-1zM1381,228h1v1h-1z" fill="#5a5a5a" shape-rendering="crispEdges"/><rect x="1383" y="221" width="7" height="11" fill="#72a38f"/><rect x="1385" y="223" width="3" height="7" fill="#fff"/><rect x="1386" y="224.5" width="1" height="1.3" fill="#72a38f"/><rect x="1386" y="227" width="1" height="1.3" fill="#72a38f"/><path d="M1391,224h1v1h-1zM1392,224h1v1h-1zM1393,224h1v1h-1zM1391,225h1v1h-1zM1391,226h1v1h-1zM1391,227h1v1h-1zM1391,228h1v1h-1zM1392,228h1v1h-1zM1393,228h1v1h-1z" fill="#5a5a5a" shape-rendering="crispEdges"/><path d="M255.4,245.2 L257.5,247.8 L263.5,241.4" fill="none" stroke="#5c5c5c" stroke-width="1.25"/><path d="M255.4,264.2 L257.5,266.8 L263.5,260.4" fill="none" stroke="#5c5c5c" stroke-width="1.25"/><path d="M255.4,283.2 L257.5,285.8 L263.5,279.4" fill="none" stroke="#5c5c5c" stroke-width="1.25"/><path d="M255.4,302.2 L257.5,304.8 L263.5,298.4" fill="none" stroke="#5c5c5c" stroke-width="1.25"/><path d="M255.4,321.2 L257.5,323.8 L263.5,317.4" fill="none" stroke="#5c5c5c" stroke-width="1.25"/><path d="M255.4,340.2 L257.5,342.8 L263.5,336.4" fill="none" stroke="#5c5c5c" stroke-width="1.25"/><rect x="331.5" y="60.5" width="60" height="77" fill="none" stroke="#f00" stroke-width="3"/><rect x="243.5" y="233.5" width="31" height="120" fill="none" stroke="#f00" stroke-width="3"/></svg>
</body></html>
